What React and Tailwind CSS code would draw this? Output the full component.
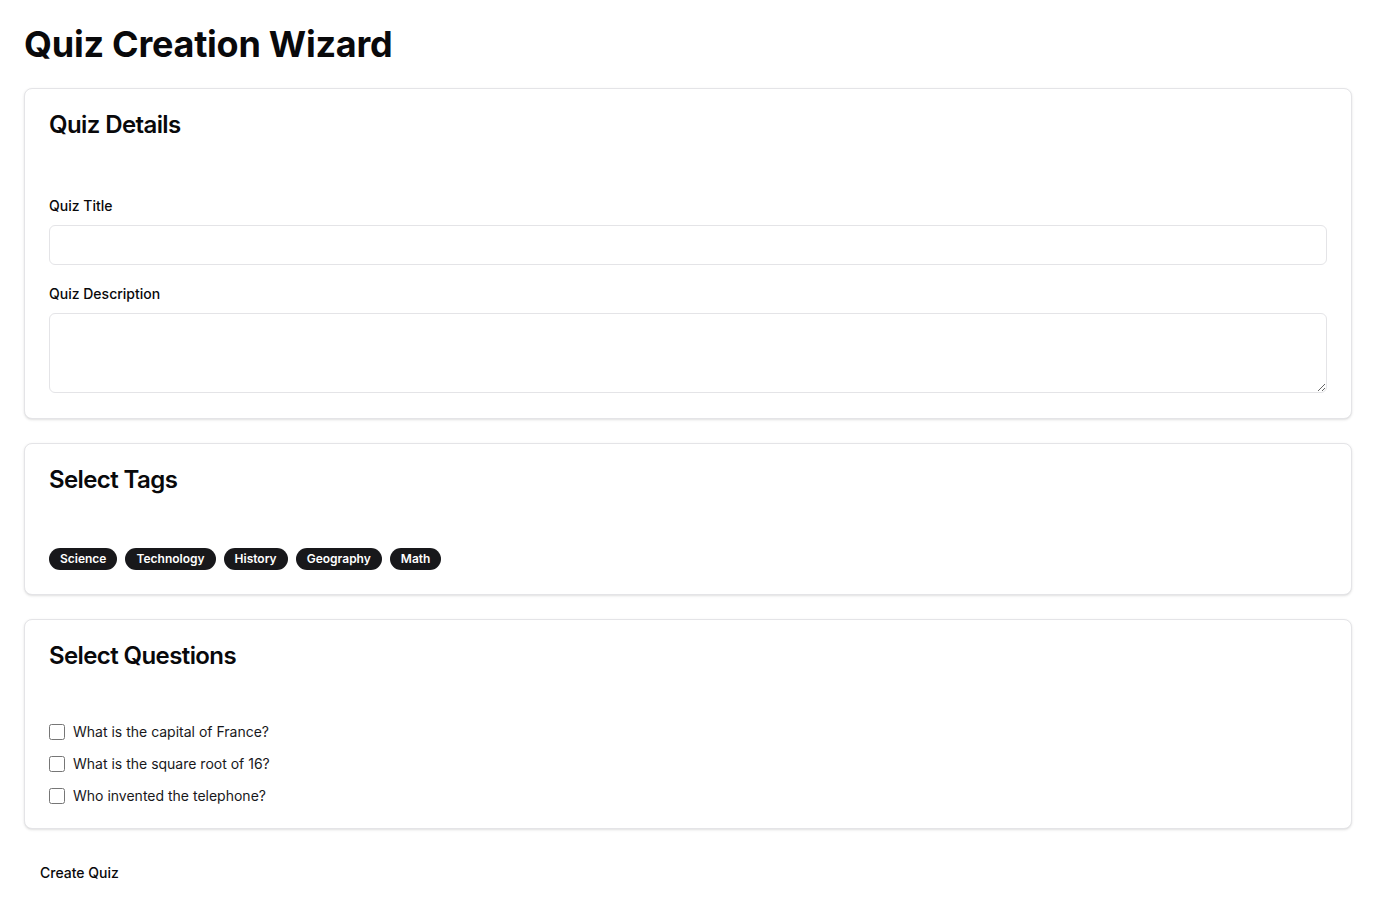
import React, { useState } from 'react';

const tags = ['Science', 'Technology', 'History', 'Geography', 'Math'];

const questions = [
  { id: 1, text: 'What is the capital of France?' },
  { id: 2, text: 'What is the square root of 16?' },
  { id: 3, text: 'Who invented the telephone?' },
];

const Card = ({ title, children, contentClass }) => (
  <div className="rounded-lg border border-[#e4e4e7] bg-white shadow-sm">
    <div className="p-6 pb-0">
      <h2 className="text-2xl font-semibold leading-none tracking-tight text-[#09090b]">{title}</h2>
    </div>
    <div className={`px-6 ${contentClass}`}>{children}</div>
  </div>
);

export default function App() {
  const [title, setTitle] = useState('');
  const [description, setDescription] = useState('');
  const [selected, setSelected] = useState([]);

  const toggle = (id) =>
    setSelected((prev) => (prev.includes(id) ? prev.filter((q) => q !== id) : [...prev, id]));

  return (
    <div className="min-h-screen bg-white p-6 text-[#09090b]" style={{ fontFamily: 'Inter, "Noto Sans", sans-serif' }}>
      <h1 className="mb-6 text-4xl font-bold leading-10 tracking-[-0.25px]">Quiz Creation Wizard</h1>

      <div className="flex flex-col gap-6">
        {/* Quiz Details */}
        <Card title="Quiz Details" contentClass="pt-[59px] pb-[25px]">
          <label className="mb-[9px] block text-sm font-medium leading-5">Quiz Title</label>
          <input
            type="text"
            value={title}
            onChange={(e) => setTitle(e.target.value)}
            className="block h-10 w-full rounded-md border border-[#e4e4e7] px-3 text-sm outline-none"
          />
          <label className="mt-[19px] mb-[9px] block text-sm font-medium leading-5">Quiz Description</label>
          <textarea
            value={description}
            onChange={(e) => setDescription(e.target.value)}
            className="block h-20 w-full rounded-md border border-[#e4e4e7] px-3 py-2 text-sm outline-none"
          />
        </Card>

        {/* Tags */}
        <Card title="Select Tags" contentClass="pt-[56px] pb-6">
          <div className="flex flex-wrap gap-2">
            {tags.map((tag) => (
              <span
                key={tag}
                className="inline-flex h-[22px] items-center rounded-full bg-[#18181b] px-[11px] text-xs font-semibold text-white"
              >
                {tag}
              </span>
            ))}
          </div>
        </Card>

        {/* Questions */}
        <Card title="Select Questions" contentClass="pt-[56px] pb-6">
          <div className="flex flex-col gap-4">
            {questions.map((q) => (
              <label key={q.id} className="flex h-4 items-center gap-2 text-sm text-[#18181b]">
                <input
                  type="checkbox"
                  checked={selected.includes(q.id)}
                  onChange={() => toggle(q.id)}
                  className="m-0 h-4 w-4"
                />
                {q.text}
              </label>
            ))}
          </div>
        </Card>
      </div>

      <button className="mt-6 h-10 rounded-md px-4 text-sm font-medium text-[#09090b]">Create Quiz</button>
    </div>
  );
}
